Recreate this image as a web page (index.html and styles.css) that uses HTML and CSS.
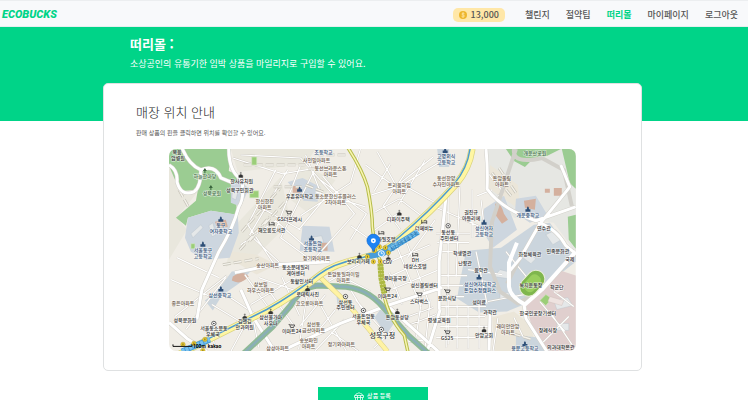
FILE: index.html
```html
<!DOCTYPE html>
<html lang="ko">
<head>
<meta charset="utf-8">
<meta name="viewport" content="width=device-width, initial-scale=1">
<title>ECOBUCKS</title>
<link rel="stylesheet" href="styles.css">
</head>
<body>
<header class="header">
  <a class="logo" href="#">ECOBUCKS</a>
  <nav class="nav">
    <a class="points" href="#">
      <svg class="coin" viewBox="0 0 16 16" aria-hidden="true"><circle cx="8" cy="8" r="8" fill="#edb62e"/><path d="M11 5.5C10 4 6 4 5.500 6c0 2.500 5.500 1.500 5.500 4 -.5 2.500-4.500 2.500-6 .5M8 2.500v11" fill="none" stroke="#ffe7a8" stroke-width="1.600"/></svg>
      13,000
    </a>
    <a href="#">챌린지</a>
    <a href="#">절약팁</a>
    <a class="active" href="#">떠리몰</a>
    <a href="#">마이페이지</a>
    <a href="#">로그아웃</a>
  </nav>
</header>
<main>
  <section class="banner">
    <h1>떠리몰 :</h1>
    <p>소상공인의 유통기한 임박 상품을 마일리지로 구입할 수 있어요.</p>
  </section>
  <div class="content">
  <section class="card">
    <h2>매장 위치 안내</h2>
    <p>판매 상품의 핀을 클릭하면 위치를 확인할 수 있어요.</p>
    <svg class="map" viewBox="168 149 408 203" preserveAspectRatio="xMidYMid slice" role="img" aria-label="매장 위치 지도">
      <defs>
        <path id="school" d="M-2.500 2v-2.500h1.500v-1.500l1-1.500 1 1.500v1.500h1.500v2.500z" fill="#2f5078"/>
        <path id="tree" d="M0-3l2 3h-1.500v2.500h-1v-2.500h-1.500z" fill="#38643c"/>
        <path id="cart" d="M-3-2h1l1 3h3l1-2.500h-4.500M-1 2.500h.5M1.500 2.500h.5" fill="none" stroke="#333" stroke-width=".8"/>
        <path id="bed" d="M-2.500-2v4M-2.500 1h5v1M-.5-1h3v2" fill="none" stroke="#333" stroke-width=".8"/>
        <g id="office"><circle r="2.200" fill="#fff" stroke="#444" stroke-width=".8"/><circle r=".8" fill="#333"/></g>
        <path id="church" d="M0-3v3M-1-2h2M-2 2.500v-2l2-1 2 1v2z" fill="#333" stroke="#333" stroke-width=".4"/>
        <g id="exit"><circle r="2.200" fill="#f3d22c" stroke="#a7942c" stroke-width=".5"/><path d="M0-1v2" stroke="#333" stroke-width=".7"/></g>
      </defs>
      <path fill="#f0ede6" d="M168 149h408v203H168z"/>

      <!-- Land use -->
      <path fill="#e9e7dd" d="M230 149h85l-10 15-68 8zM235 225l45-48 10 45-35 35-30 10zM300 165l35 15-25 35-20-15zM168 165l8 18 20 10-20 25 10 12-18 30z"/>
      <path fill="#e6e7e3" d="M486 149h90v104l-22-30-40-5-25-27z"/>
      <path fill="#ebe6d9" d="M490 165l28 20 2 25-32-22zM492 318l22-6 15 12 10 28h-44zM216 250l40 5 20 10-20 10-30-18z"/>
      <path fill="#9bcc92" d="M168 149h62l-2 22 9 4-2 12 1 28-26-4-23 7-2 8-10-8 20-17 2-11-14 1-8-9-7-16z"/>
      <path fill="#9bcc92" d="M506 149h55l-14 7-15 4-7 7-11-6zM562 149h14v40l-6-6zM568 217l8-2v34l-7-9z"/>
      <path fill="#cdd6df" d="M187 218l23-7 27 4 1 18-9 25-24 2-15-8-6-14zM230 184l10-3 8 8-8 18-10-4zM287 182l15-4 18 9-3 15-14-1zM302 226l27 1 5 25-35-1zM484 209l20-13 13 34-24 18-13-20zM516 199l20-3 12 20-18 7-15-10z"/>
      <path fill="#cbd5dd" d="M534 225l16-2 14 19 12 10v10l-28 22-24 21-17 7-28 1-22-14 3-18 6-30 35-3zM216 292l15-20 20-2-10 12-20 14-9 15-8-10zM374 318l6-8 15 12-9 13zM516 336l24 2 9 14h-33zM336 297h9v8h-8zM437 149h12v18h-10z"/>
      <path fill="#e0cfce" d="M576 276v76h-26l-16-18-8-28 8-10 24-26z"/>
      <path fill="#d4b09e" d="M495 204q6-2 9 10l4 6-6 4-6-8zM524 201l12-2-1 11-10-2zM292 186h8v7h-8zM319 243h8v8h-8zM214 222l11-2 2 7-10 1zM232 277q10-7 16 0-8 9-17 4zM545 189h5v4h-5zM554 188h8v8h-8z"/>
      <path fill="#e5e8e9" stroke="#b8c3ca" stroke-width=".4" d="M208 226l4-3 3 12-4 2zM190 234l10-9 2 3-10 10zM308 238l13-2 2 6-12 3zM546 235l10-5 7 9-10 6zM500 270l12 3-4 6-14-2zM482 280l15 3-1 5-14-2zM523 249l13 10-5 5-12-9zM500 293h9v6h-9zM554 301l14-3 5 8-16 4zM557 324h12v7h-12zM232 187l6 2-3 11-4-2z"/>

      <!-- Side streets -->
      <g fill="none" stroke="#cfcbc3" stroke-width="2">
        <path d="M240 155l60 3 40 45M275 170l-28 55 30 45M255 205l45 25M287 170l-38 65 30 28M300 165l-25 65M305 155l18 45-25 30M240 245l35-24 30 26M232 158l50 16 46-8M320 158l-40 80 30 22M322 176l32 38-40 45M315 192l50 15M300 216l50-33 10-34M350 240l16-26-46-34M350 226l20 14M365 165l30 22 38-30M377 152l20 36 46-28M371 195l32-10 32 18M375 212l24-13 26 20M390 164l-16 27M406 172l-23 34 17 24M425 160l-27 45M372 232l28-20M435 220l-28 38M430 205l50 22M448 195v150M460 182l-4 95M436 234h34M437 243h32M438 252h29M437 276h30M439 286h24M440 297h24M438 307h48M440 317h45M440 327h48M436 338h56M446 306v42M457 306v43M468 307v42M479 305v44M487 172l16 20-5 4M477 196l15-6M472 190v48M481 200l4 35"/>
        <path d="M170 280l42 18M176 258l42 20M174 317l52-41M185 330l40-52M211 305l40 24M225 295l47 31M244 275l33 46M258 278l42 15M250 305l45-27M266 288l29 41M281 277l18 39M215 350l-7-25M230 352l15-28M258 348l-7-36M306 298l-8 52M314 295l32 57M325 295l-26 32M335 310l-31 38M330 332l28 20M344 320l-30 32M355 300l32 36M350 290l18 30M340 276l30 16M328 282l32-18M397 248l24 60M407 244l22 60M390 262l40-17M389 277l53-24M391 290l48-20M402 305l-13-32M400 320l33-12M405 327l31-12M421 303l-6 40M430 300l-5 47M393 330l-20 19M405 343l28-4M506 252l22 27M476 252l11 52M468 270l34 5M498 318l-5 34M514 318l9 19M488 302l36-7M540 302l25 30M554 292l20 15M527 315h25l20 30M541 345l28-28"/>
      </g>
      <g fill="none" stroke="#fff" stroke-width="1.200">
        <path d="M240 155l60 3 40 45M275 170l-28 55 30 45M255 205l45 25M287 170l-38 65 30 28M300 165l-25 65M305 155l18 45-25 30M240 245l35-24 30 26M232 158l50 16 46-8M320 158l-40 80 30 22M322 176l32 38-40 45M315 192l50 15M300 216l50-33 10-34M350 240l16-26-46-34M350 226l20 14M365 165l30 22 38-30M377 152l20 36 46-28M371 195l32-10 32 18M375 212l24-13 26 20M390 164l-16 27M406 172l-23 34 17 24M425 160l-27 45M372 232l28-20M435 220l-28 38M430 205l50 22M448 195v150M460 182l-4 95M436 234h34M437 243h32M438 252h29M437 276h30M439 286h24M440 297h24M438 307h48M440 317h45M440 327h48M436 338h56M446 306v42M457 306v43M468 307v42M479 305v44M487 172l16 20-5 4M477 196l15-6M472 190v48M481 200l4 35"/>
        <path d="M170 280l42 18M176 258l42 20M174 317l52-41M185 330l40-52M211 305l40 24M225 295l47 31M244 275l33 46M258 278l42 15M250 305l45-27M266 288l29 41M281 277l18 39M215 350l-7-25M230 352l15-28M258 348l-7-36M306 298l-8 52M314 295l32 57M325 295l-26 32M335 310l-31 38M330 332l28 20M344 320l-30 32M355 300l32 36M350 290l18 30M340 276l30 16M328 282l32-18M397 248l24 60M407 244l22 60M390 262l40-17M389 277l53-24M391 290l48-20M402 305l-13-32M400 320l33-12M405 327l31-12M421 303l-6 40M430 300l-5 47M393 330l-20 19M405 343l28-4M506 252l22 27M476 252l11 52M468 270l34 5M498 318l-5 34M514 318l9 19M488 302l36-7M540 302l25 30M554 292l20 15M527 315h25l20 30M541 345l28-28"/>
      </g>

      <!-- Apartment blocks -->
      <path fill="none" stroke="#c5c2b7" stroke-width="2.800" stroke-dasharray="8 3" d="M243 165h62M241 232l38-43M249 241l39-43M239 250l30-33M273 187h28M308 169h32M305 185l20 8M178 190l10 18M222 265l36-6M492 173l20 24M499 168l17 25M502 331l30 9M345 155h-27"/>
      <path fill="none" stroke="#f4f2eb" stroke-width="1.400" stroke-dasharray="8 3" d="M243 165h62M241 232l38-43M249 241l39-43M239 250l30-33M273 187h28M308 169h32M305 185l20 8M178 190l10 18M222 265l36-6M492 173l20 24M499 168l17 25M502 331l30 9M345 155h-27"/>

      <!-- White main roads -->
      <g fill="none" stroke-linejoin="round">
        <path stroke="#d2d0ca" stroke-width="4" d="M181 148q7 17 19 22 14-6 20 8l12 5M200 170q0 17-7 22-13 5-17-10 1-12-8-17M228 149q0 23 13 31 3 18-3 27-6 22-20 45l-17 38-5 30M168 323l18 16 20 13M280 352l60-28 47-18 55-18M234 273l40-8 55-3M240 290l12 27 22 35M486 149q2 22 1 40 14 20 49 32l40-14M561 165l9 22-12 15-18 22-20 35-13 25M538 222q20 8 28 24l10 8M576 254l-34 36-24 14-18-12-10-25 2-45 24-73M514 149q-2 16 28 9l22 12 8 36M440 310l-13 42M446 195l-7 67v48M386 305l52 47M490 313l-1 38M524 304l2 15 21 33"/>
        <path stroke="#fff" stroke-width="3" d="M181 148q7 17 19 22 14-6 20 8l12 5M200 170q0 17-7 22-13 5-17-10 1-12-8-17M228 149q0 23 13 31 3 18-3 27-6 22-20 45l-17 38-5 30M168 323l18 16 20 13M280 352l60-28 47-18 55-18M234 273l40-8 55-3M240 290l12 27 22 35M486 149q2 22 1 40 14 20 49 32l40-14M561 165l9 22-12 15-18 22-20 35-10 12M538 222q20 8 28 24l10 8M440 310l-13 42M446 195l-7 67v48M386 305l52 47M490 313l-1 38M524 304l2 15 21 33"/>
        <path stroke="#fff" stroke-width="4" d="M576 252l-34 38-17 15q-15-8-16-18v-24l8-20"/>
      </g>

      <!-- Stream, arterial roads and subway lines -->
      <g fill="none" stroke-linejoin="round">
        <path stroke="#8fb996" stroke-width="6" d="M243 354l29-27 18-21q10-18 27-20l22 1q27 0 45 22l24 27 20 18"/>
        <path stroke="#8aafb7" stroke-width="2.500" d="M243 354l29-27 18-21q10-18 27-20l22 1q27 0 45 22l24 27 20 18"/>
        <path stroke="#d8cf86" stroke-width="5" d="M320 278l27 26 40 48"/>
        <path stroke="#fff3a3" stroke-width="4" d="M320 278l27 26 40 48"/>
        <path stroke="#d9d27e" stroke-width="7" d="M472 149q-3 20-16 35-25 28-56 54-15 15-40 21-26 5-40 16-25 20-52 35l-94 47"/>
        <path stroke="#fff6a1" stroke-width="5.500" d="M472 149q-3 20-16 35-25 28-56 54-15 15-40 21-26 5-40 16-25 20-52 35l-94 47"/>
        <path stroke="#4d9bd0" stroke-width="1.500" d="M470 149q-3 20-16 35-25 28-56 54-15 15-40 21-26 5-40 16-25 20-52 35l-94 47"/>
        <path stroke="#b6bc4a" stroke-width="3.500" d="M347 147q15 23 20 40 5 25 5 40l3 24 5 10 3 31q4 25 21 44l4 18"/>
        <path stroke="#f8f5b2" stroke-width="1.500" d="M347 147q15 23 20 40 5 25 5 40l3 24 5 10 3 31q4 25 21 44l4 18"/>
        <path stroke="#adb943" stroke-width="6" stroke-dasharray="3 .5" d="M380 264l1 14 3 16"/>
        <path stroke="#469ddb" stroke-width="6" d="M366 257l16-3 36-22M181 352l28-12"/>
        <path stroke="#7bc2ee" stroke-width="4" stroke-dasharray="3 1" d="M388 250l30-18M181 352l28-12"/>
      </g>

      <!-- Sports ground -->
      <g transform="rotate(-48 532 284)"><rect x="518" y="275" width="29" height="18" rx="9" fill="#7fb64d" stroke="#e9edd8"/><rect x="523" y="278" width="19" height="12" rx="5" fill="#99ce5d"/></g>
      <path fill="#9bce78" stroke="#d2e5c1" stroke-width=".6" d="M540 301l6-6 6 4-6 7zM249 191h9v7h-9zM251 157h5v8h-5zM190 244h4v5h-4z"/>
      <path fill="#eee3e0" stroke="#cbb8b4" stroke-width=".4" d="M550 297l14 4-2 5-14-4zM553 289l8-4 4 5-8 4z"/>

      <!-- Pictograms -->
      <use href="#tree" x="204" y="171"/><use href="#tree" x="210" y="188"/>
      <use href="#school" x="220" y="220"/><use href="#school" x="202" y="245"/><use href="#school" x="220" y="290"/><use href="#school" x="299" y="190"/><use href="#school" x="311" y="239"/><use href="#school" x="445" y="151"/><use href="#school" x="484" y="223"/><use href="#school" x="528" y="210"/><use href="#school" x="479" y="278"/><use href="#school" x="525" y="345"/>
      <use href="#cart" x="288" y="213"/><use href="#cart" x="291" y="327"/><use href="#cart" x="387" y="290"/><use href="#cart" x="447" y="333"/><use href="#cart" x="419" y="295"/><use href="#cart" x="447" y="292"/>
      <use href="#bed" x="381" y="233"/><use href="#bed" x="424" y="222"/><use href="#bed" x="415" y="255"/><use href="#bed" x="271" y="224"/>
      <use href="#church" x="399" y="213"/><use href="#church" x="397" y="312"/><use href="#church" x="484" y="330"/><use href="#church" x="244" y="317"/><use href="#church" x="359" y="256"/><use href="#church" x="270" y="312"/><use href="#church" x="240" y="175"/><use href="#church" x="307" y="289"/><use href="#church" x="388" y="258"/>
      <use href="#office" x="448" y="226"/><use href="#office" x="345" y="297"/><use href="#office" x="381" y="330"/><use href="#office" x="363" y="311"/><use href="#office" x="213" y="324"/>
      <use href="#exit" x="379" y="247"/><use href="#exit" x="385" y="248"/><use href="#exit" x="388" y="253"/><use href="#exit" x="367" y="257"/><use href="#exit" x="373" y="262"/><use href="#exit" x="380" y="262"/><use href="#exit" x="374" y="251"/><use href="#exit" x="182" y="345"/><use href="#exit" x="193" y="344"/><use href="#exit" x="204" y="340"/><use href="#exit" x="202" y="351"/>

      <g class="place">
        <text x="176" y="154">복음</text><text x="177" y="160">암병원</text>
        <text x="241" y="183">한사유치원</text><text x="239" y="192">성북구민회관</text>
        <text x="299" y="198">우촌유아학교</text><text x="289" y="221">GS더프레시</text><text x="271" y="232">해오름도서관</text>
        <text x="398" y="221">디파이주택</text><text x="386" y="241">파밀호텔</text><text x="424" y="230">더메비뉴</text>
        <text x="448" y="234">동선동</text><text x="449" y="240">주민센터</text><text x="471" y="214">권진규</text><text x="471" y="220">아틀리에</text>
        <text x="462" y="255">학생별관</text><text x="465" y="265">난향관</text><text x="481" y="272">음악관</text><text x="479" y="304">성미료</text><text x="490" y="315">과학관</text>
        <text x="544" y="230">연수관</text><text x="530" y="256">화정체육관</text><text x="558" y="253">민족문화관</text><text x="570" y="261">국제</text><text x="531" y="287">녹지운동장</text><text x="557" y="289">학군단</text>
        <text x="538" y="316">한국인공장기센터</text><text x="548" y="333">장례식장</text><text x="561" y="350">의과대학본관</text>
        <text x="184" y="323">성북문화원</text><text x="213" y="331">서울동소문동</text><text x="212" y="337">우체국</text><text x="244" y="324">김앤김</text><text x="244" y="330">안과의원</text>
        <text x="270" y="320">삼선불가마</text><text x="270" y="326">사우나</text><text x="291" y="334">이마트24</text><text x="295" y="269">동소문데일리</text><text x="295" y="275">케어센터</text><text x="301" y="283">동활인서터</text><text x="307" y="296">로데릭사진</text>
        <text x="358" y="263">보리리카페</text><text x="387" y="264">CGV</text><text x="415" y="262">DH</text><text x="415" y="268">네상스호텔</text><text x="395" y="280">북마을극장</text><text x="387" y="298">이마트24</text><text x="424" y="287">성신볼링센터</text><text x="419" y="303">스타벅스</text>
        <text x="345" y="304">삼선동</text><text x="345" y="310">주민센터</text><text x="363" y="319">서울돈암동</text><text x="363" y="325">우체국</text><text x="397" y="320">돈암동성당</text><text x="439" y="323">평생교육원</text><text x="447" y="300">문화식당</text><text x="447" y="341">GS25</text><text x="484" y="338">안암교회</text>
      </g>
      <g class="place district"><text x="382" y="339">성북구청</text></g>
      <g class="place apartment">
        <text x="264" y="203">한신한진</text><text x="264" y="209">아파트</text><text x="316" y="162">사인빌아파트</text><text x="330" y="170">동선브라운스톤</text><text x="330" y="176">아파트</text><text x="335" y="198">동소문한신휴플러스</text><text x="335" y="204">2차아파트</text><text x="399" y="187">트리움하임</text><text x="399" y="193">아파트</text><text x="446" y="180">동선한양</text><text x="446" y="186">수자인아파트</text><text x="502" y="180">돈암풀림</text><text x="502" y="186">아파트</text>
        <text x="267" y="267">송산아파트</text><text x="316" y="260">정기와아파트</text><text x="260" y="286">삼보빌</text><text x="260" y="292">하우스아파트</text><text x="182" y="305">좋은아파트</text><text x="343" y="276">돈암동일하이빌</text><text x="343" y="282">아파트</text><text x="309" y="305">코오롱아파트</text><text x="313" y="327">삼선동</text><text x="313" y="333">금산아파트</text><text x="308" y="343">송보파인</text><text x="308" y="349">아파트</text><text x="341" y="347">정기와아파트</text><text x="277" y="351">삼성아파트</text><text x="508" y="329">래미안안암</text><text x="508" y="335">아파트</text>
      </g>
      <g class="place education">
        <text x="323" y="154">초등학교</text><text x="446" y="158">고명외식</text><text x="446" y="164">고등학교</text><text x="220" y="227">동구</text><text x="220" y="233">여자중학교</text><text x="202" y="252">서울동구</text><text x="202" y="258">고등학교</text><text x="219" y="297">삼선중학교</text><text x="312" y="245">서울돈암</text><text x="312" y="251">초등학교</text><text x="484" y="230">성신여자</text><text x="484" y="236">고등학교</text><text x="528" y="217">개운중학교</text><text x="480" y="286">성신여자대학교</text><text x="480" y="292">돈암수정캠퍼스</text><text x="525" y="351">용문고등학교</text>
      </g>
      <g class="place park"><text x="204" y="178">하늘한마당</text><text x="211" y="195">성북공원</text><text x="535" y="155">개운산공원</text></g>
      <g class="line"><text transform="translate(405 243) rotate(-32)">성신여대입구역</text></g>

      <!-- Store pin -->
      <path fill="#1c83f4" stroke="#1268cf" stroke-width=".6" d="M373 252q-1.500-4-4-6a6.500 6.500 0 1 1 8 0q-2.500 2-4 6z"/><circle cx="373" cy="241" r="2.500" fill="#fff"/><circle cx="373" cy="241" r=".8" fill="#1c83f4"/>
      <circle cx="381" cy="254" r="3" fill="#51adf1" stroke="#fff"/><path d="M381 252v2h1.500" fill="none" stroke="#fff" stroke-width=".8"/>
      <!-- Scale and provider -->
      <path d="M172 345v2h19v-2" fill="none" stroke="#111" stroke-width="1"/>
      <g class="credit"><text x="192" y="349">100m</text><text x="207" y="349">kakao</text></g>
    </svg>
  </section>
  <button class="register" type="button">
    <svg class="basket" viewBox="0 0 20 18" aria-hidden="true" fill="none" stroke="currentColor" stroke-width="1.500"><path d="M3 7q0-4 4-4 3-3 6 0 4 0 4 4M1 7h18v4H1zM3 11v6h14v-6M7 7v10M13 7v10"/></svg>
    상품 등록
  </button>
  </div>
</main>
</body>
</html>
```

FILE: styles.css
```css
* {
  box-sizing: border-box;
}

body {
  margin: 0;
  background: #fff;
  color: #333;
  font-family: "Noto Sans CJK KR", sans-serif;
}

h1,
h2,
p {
  margin: 0;
}

a {
  color: inherit;
  text-decoration: none;
}

.header {
  display: flex;
  align-items: center;
  justify-content: space-between;
  height: 27px;
  padding: 2px 10px 0 2px;
  background: #f8f9fb;
  border-top: 1px solid #eceef0;
  border-bottom: 1px solid #e6eeee;
}

.logo {
  color: #00d488;
  font: italic 900 11px/16px Roboto, sans-serif;
}

.nav {
  display: flex;
  align-items: center;
  gap: 16px;
  font-size: 9px;
  font-weight: 500;
  line-height: 14px;
  color: #555;
}

.nav .active {
  color: #00d488;
  font-weight: 700;
}

.points {
  display: flex;
  align-items: center;
  gap: 4px;
  margin-right: 4px;
  padding: 0 6px;
  border-radius: 5px;
  background: #ffe7a8;
}

.coin {
  width: 8px;
  height: 8px;
}

.banner {
  height: 94px;
  padding: 8px 130px;
  background: #00d488;
  color: #fff;
}

.banner h1 {
  font-size: 13px;
  font-weight: 700;
  line-height: 18px;
}

.banner p {
  margin-top: 4px;
  font-size: 9px;
  line-height: 14px;
}

.content {
  margin-top: -38px;
  padding-right: 3px;
}

.card {
  width: 539px;
  max-width: 100%;
  margin: 0 auto;
  padding: 19px 32px;
  background: #fff;
  border: 1px solid #dfe1e2;
  border-radius: 5px;
}

.card h2 {
  color: #222;
  font-size: 13px;
  font-weight: 300;
  line-height: 18px;
}

.card p {
  margin-top: 7px;
  color: #555;
  font-size: 6px;
  line-height: 10px;
}

.map {
  display: block;
  width: 86%;
  margin: 11px auto 0;
  border-radius: 7px;
}

.place {
  fill: #333;
  stroke: #fff;
  stroke-width: 1px;
  stroke-opacity: 0.7;
  paint-order: stroke;
  font-size: 5px;
  font-weight: 500;
  text-anchor: middle;
}

.apartment {
  fill: #6d5b4c;
}

.education {
  fill: #35547a;
}

.park {
  fill: #3f6c45;
}

.district {
  font-size: 7px;
}

.line {
  fill: #17679e;
  font-size: 5px;
  text-anchor: middle;
}

.credit {
  font: 700 5px Roboto, sans-serif;
}

.register {
  display: flex;
  align-items: center;
  justify-content: center;
  gap: 3px;
  width: 110px;
  height: 18px;
  margin: 16px auto 0;
  padding: 0;
  border: 0;
  background: #00d488;
  color: #fff;
  font: 500 6px/10px "Noto Sans CJK KR", sans-serif;
}

.basket {
  width: 10px;
  height: 9px;
}
```
